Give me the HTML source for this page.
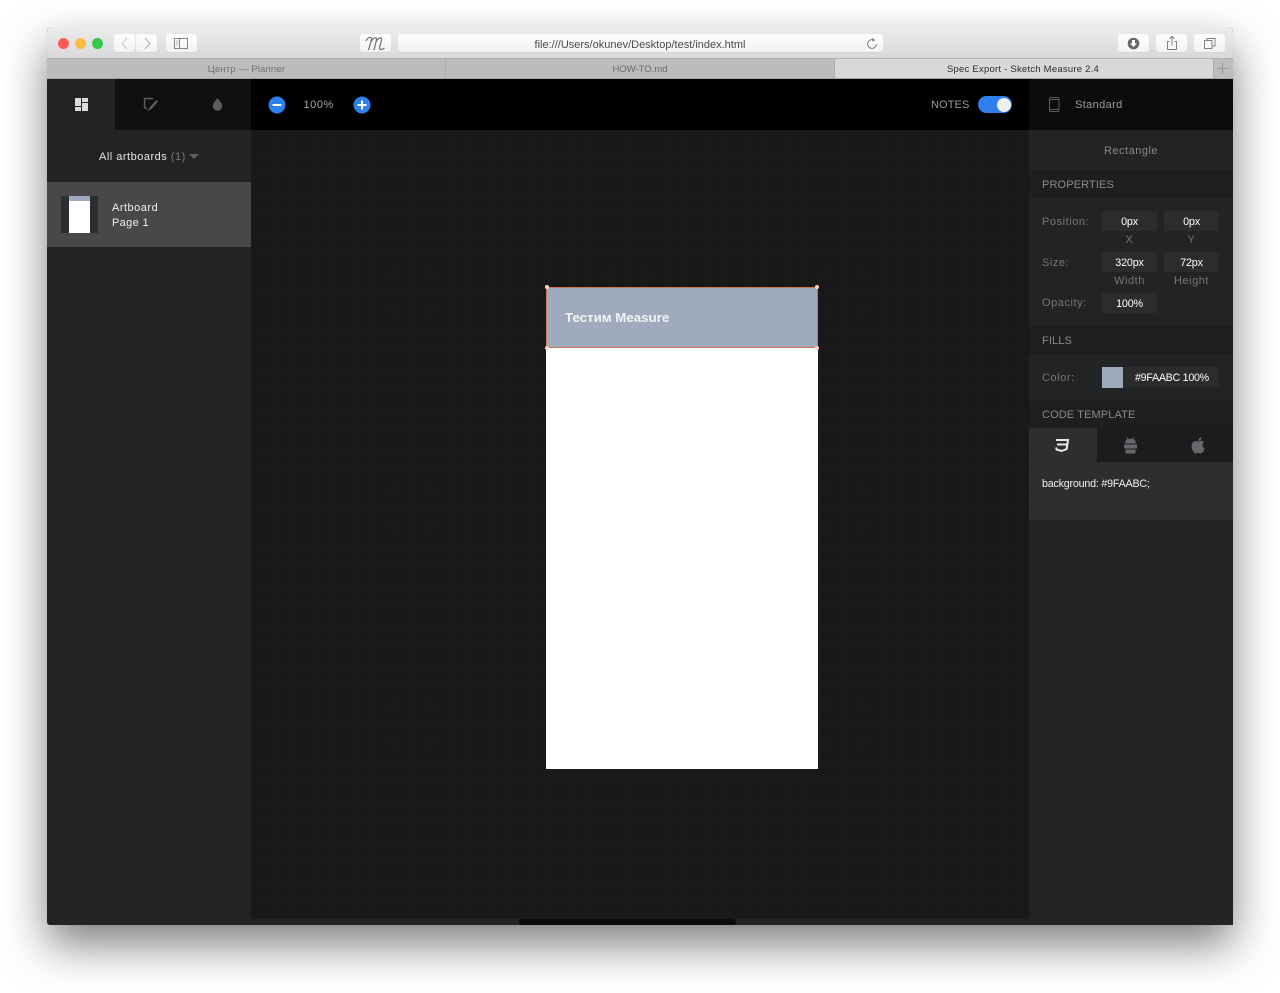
<!DOCTYPE html>
<html><head><meta charset="utf-8"><style>
*{box-sizing:border-box}
html,body{margin:0;padding:0;width:1280px;height:993px;background:#fff;overflow:hidden;font-family:"Liberation Sans","Noto Sans CJK SC",sans-serif}
.a{position:absolute}
.t{position:absolute;white-space:nowrap;line-height:14px}
.btn{position:absolute;background:linear-gradient(#fdfdfd,#f3f3f3);border-radius:3px;box-shadow:0 1px 0 #d4d4d4}
.field{position:absolute;background:#2b2c2e;height:20px;width:55px;color:#fff;font-size:10.800px;line-height:22px;text-align:center;letter-spacing:-.2px}
.lab{position:absolute;color:#77787a;font-size:11px;letter-spacing:.55px;line-height:14px;white-space:nowrap}
.sec{position:absolute;left:1029px;width:204px;background:#1d1e20;color:#8b8c8e;font-size:11px;letter-spacing:.12px;padding-left:13px}
</style></head><body>
<div class="a" style="left:47px;top:27px;width:1186px;height:898px;border-radius:5px 5px 3px 3px;box-shadow:0 0 1px rgba(0,0,0,.1),0 20px 44px rgba(0,0,0,.5)"></div>
<div class="a" style="left:47px;top:27px;width:1186px;height:898px;border-radius:5px 5px 3px 3px;overflow:hidden;background:#222325">
 <div class="a" style="left:0;top:0;width:1186px;height:31px;background:linear-gradient(#ececec,#d9d9d9)"></div>
 <div class="a" style="left:0;top:31px;width:1186px;height:21px;background:#bcbcbc;border-top:1px solid #b0b0b0;border-bottom:1px solid #a4a4a4"></div>
 <div class="a" style="left:788px;top:32px;width:378px;height:19px;background:#d8d8d8"></div>
 <div class="a" style="left:398px;top:32px;width:1px;height:19px;background:#acacac"></div>
 <div class="a" style="left:787px;top:32px;width:1px;height:19px;background:#acacac"></div>
 <div class="a" style="left:1166px;top:32px;width:20px;height:19px;background:#bdbdbd;border-left:1px solid #acacac"></div>
</div>
<div class="a" style="left:58px;top:38px;width:11px;height:11px;border-radius:50%;background:#fc5b57"></div>
<div class="a" style="left:75px;top:38px;width:11px;height:11px;border-radius:50%;background:#fdbc40"></div>
<div class="a" style="left:92px;top:38px;width:11px;height:11px;border-radius:50%;background:#34c84a"></div>

<div class="btn" style="left:114px;top:34px;width:21px;height:18px"></div>
<div class="btn" style="left:136px;top:34px;width:21px;height:18px"></div>
<svg class="a" style="left:114px;top:34px" width="44" height="18" fill="none" stroke-width="1"><path d="M13 4L8 9.500l5 5.500" stroke="#c4c4c4"/><path d="M31 4l5 5.500-5 5.500" stroke="#aaa"/></svg>
<div class="btn" style="left:166px;top:34px;width:31px;height:18px"></div>
<svg class="a" style="left:174px;top:38px" width="15" height="11" fill="none" stroke="#888"><rect x=".5" y=".5" width="13" height="10"/><path d="M5.500 .5v10"/><path d="M2 3h2M2 5h2M2 7h2" stroke="#bbb"/></svg>
<div class="btn" style="left:360px;top:34px;width:31px;height:18px"></div>
<svg class="a" style="left:365px;top:36px" width="22" height="16" fill="none" stroke="#707070" stroke-width="1.200"><path d="M1 5C3 1 7 0 6.500 3.500L3.500 14M6.500 5c2-3.500 5.500-4.500 5-1L9 14M11.500 5c2-3.500 5.500-4.500 5-1L14.500 12c0 2 2.500 2 5 0"/></svg>
<div class="btn" style="left:398px;top:34px;width:485px;height:18px"></div>
<div class="t" style="left:397.500px;width:485px;top:38px;text-align:center;font-size:11px;color:#4a4a4a">file:///Users/okunev/Desktop/test/index.html</div>
<svg class="a" style="left:866px;top:37px" width="12" height="13" fill="none" stroke="#808080"><path d="M8.700 3.500A4.400 4.400 0 1 0 10.400 7"/><path d="M6.500 .8l2.700 2.500-3 1.500z" fill="#808080" stroke="none"/></svg>
<div class="btn" style="left:1118px;top:34px;width:31px;height:18px"></div>
<div class="btn" style="left:1156px;top:34px;width:31px;height:18px"></div>
<div class="btn" style="left:1194px;top:34px;width:31px;height:18px"></div>
<svg class="a" style="left:1127px;top:37px" width="13" height="13"><circle cx="6.500" cy="6.500" r="5.800" fill="#666"/><path d="M5 3h3v3.500h2L6.500 10 3 6.500h2z" fill="#fff"/></svg>
<svg class="a" style="left:1165px;top:35px" width="14" height="16" fill="none" stroke="#808080"><path d="M4.500 6.500h-2v8h9v-8h-2M7 10.500V1.500M4.500 3.800L7 1.300l2.500 2.500"/></svg>
<svg class="a" style="left:1204px;top:38px" width="12" height="11" fill="none" stroke="#808080"><rect x=".5" y="2.500" width="7.500" height="8"/><path d="M3 2.500V.5h8v7.500H8"/></svg>

<div class="t" style="left:47px;width:399px;top:63px;text-align:center;font-size:9.500px;letter-spacing:.18px;color:#6f6f6f">Центр — Planner</div>
<div class="t" style="left:445.500px;width:389px;top:63px;text-align:center;font-size:9.500px;color:#6a6a6a">HOW-TO.md</div>
<div class="t" style="left:834px;width:378px;top:63px;text-align:center;font-size:9.500px;color:#2c2c2c;letter-spacing:.23px">Spec Export - Sketch Measure 2.4</div>
<svg class="a" style="left:1217px;top:63px" width="11" height="11" stroke="#969696"><path d="M5.500 0v11M0 5.500h11"/></svg>

<!-- app -->
<div class="a" style="left:115px;top:79px;width:136px;height:51px;background:#101011"></div>
<div class="a" style="left:47px;top:79px;width:68px;height:51px;background:#222325"></div>
<div class="a" style="left:251px;top:79px;width:778px;height:51px;background:#000"></div>
<div class="a" style="left:1029px;top:79px;width:204px;height:51px;background:#0c0c0d"></div>
<svg class="a" style="left:75px;top:98px" width="13" height="13" fill="#dcdcdc"><rect width="6" height="8"/><rect y="9" width="6" height="4"/><rect x="7" width="6" height="4"/><rect x="7" y="5" width="6" height="8"/></svg>
<svg class="a" style="left:142px;top:96px" width="17" height="16" fill="none" stroke="#5e5e60" stroke-width="1.400"><path d="M11 2.500H2.500v9l2.500 1.500"/><path d="M14.500 4L8 11l-2.500 4.500L10 12.500l6-7z" fill="#5e5e60" stroke="none"/></svg>
<svg class="a" style="left:212px;top:98px" width="11" height="13" fill="#5e5e60"><path d="M5.500 0C4 2.500 .8 5 .8 8a4.700 4.700 0 0 0 9.400 0C10.200 5 7 2.500 5.500 0z"/></svg>

<svg class="a" style="left:267.500px;top:95.500px" width="18" height="18"><circle cx="9" cy="9" r="8.500" fill="#2f80ed"/><rect x="4.500" y="8" width="9" height="2" fill="#fff"/></svg>
<div class="t" style="left:303.500px;top:98px;font-size:11px;letter-spacing:.55px;color:#a6a6a6">100%</div>
<svg class="a" style="left:352.500px;top:95.500px" width="18" height="18"><circle cx="9" cy="9" r="8.500" fill="#2f80ed"/><path d="M4.500 8h9v2h-9z M8 4.500h2v9H8z" fill="#fff"/></svg>
<div class="t" style="left:931px;top:98px;font-size:11px;letter-spacing:.1px;color:#9a9a9a">NOTES</div>
<div class="a" style="left:978px;top:96px;width:34px;height:17px;border-radius:9px;background:#2f80ed"></div>
<div class="a" style="left:997px;top:97.500px;width:14px;height:14px;border-radius:50%;background:#eee"></div>
<svg class="a" style="left:1049px;top:97px" width="11" height="15" fill="none" stroke="#5a5a5c"><rect x=".5" y=".5" width="9.500" height="14" rx="1.500"/><path d="M.5 2.500h9.500M.5 12.500h9.500"/></svg>
<div class="t" style="left:1075px;top:98px;font-size:11px;letter-spacing:.38px;color:#9c9c9c">Standard</div>

<!-- left -->
<div class="t" style="left:99px;top:149.500px;font-size:11px;letter-spacing:.5px;color:#e6e6e6">All artboards <span style="color:#77787a">(1)</span></div>
<svg class="a" style="left:189px;top:154px" width="10" height="5"><path d="M0 0h10L5 5z" fill="#5e5f62"/></svg>
<div class="a" style="left:47px;top:182px;width:204px;height:65px;background:#47484a"></div>
<div class="a" style="left:61px;top:196px;width:37px;height:37px;background:#2d2e31"></div>
<div class="a" style="left:69px;top:196px;width:21px;height:37px;background:#fff"></div>
<div class="a" style="left:69px;top:196px;width:21px;height:5px;background:#9faabc"></div>
<div class="t" style="left:112px;top:200.500px;font-size:11px;letter-spacing:.5px;color:#f0f0f0">Artboard</div>
<div class="t" style="left:112px;top:215.500px;font-size:11px;letter-spacing:.35px;color:#f0f0f0">Page 1</div>

<!-- canvas -->
<svg class="a" style="left:251px;top:130px" width="778" height="795"><defs><pattern id="d" x="5" y="6" width="13.500" height="13.500" patternUnits="userSpaceOnUse"><rect width="13.500" height="13.500" fill="#191919"/><rect x="0" y="0" width="1.500" height="1.500" fill="#101010"/></pattern></defs><rect width="778" height="795" fill="url(#d)"/></svg>
<div class="a" style="left:251px;top:919px;width:778px;height:6px;background:#222325"></div>
<div class="a" style="left:519px;top:919px;width:217px;height:6px;border-radius:3px;background:#0b0b0b"></div>
<div class="a" style="left:546px;top:287px;width:271.500px;height:481.500px;background:#fff"></div>
<div class="a" style="left:546px;top:287px;width:272px;height:61px;background:#9faabc;border:1px solid #d0744f"></div>
<div class="a" style="left:545px;top:285px;width:4px;height:4px;border-radius:50%;background:#f7d6c6"></div>
<div class="a" style="left:815px;top:285px;width:4px;height:4px;border-radius:50%;background:#f7d6c6"></div>
<div class="a" style="left:545px;top:346px;width:4px;height:4px;border-radius:50%;background:#f7d6c6"></div>
<div class="a" style="left:815px;top:346px;width:4px;height:4px;border-radius:50%;background:#f7d6c6"></div>
<div class="t" style="left:565px;top:311px;font-size:13.300px;font-weight:bold;color:#f2f4f7">Тестим Measure</div>

<!-- right -->
<div class="a" style="left:1029px;top:130px;width:204px;height:795px;background:#222325"></div>
<div class="t" style="left:1029px;width:204px;top:143.500px;text-align:center;font-size:11px;letter-spacing:.5px;color:#87888a">Rectangle</div>
<div class="sec" style="top:170px;height:28px;line-height:30px">PROPERTIES</div>
<div class="lab" style="left:1042px;top:214.500px">Position:</div>
<div class="field" style="left:1102px;top:211px">0px</div>
<div class="field" style="left:1164px;top:211px">0px</div>
<div class="lab" style="left:1102px;width:55px;text-align:center;top:232.500px">X</div>
<div class="lab" style="left:1164px;width:55px;text-align:center;top:232.500px">Y</div>
<div class="lab" style="left:1042px;top:255.500px">Size:</div>
<div class="field" style="left:1102px;top:252px">320px</div>
<div class="field" style="left:1164px;top:252px">72px</div>
<div class="lab" style="left:1102px;width:55px;text-align:center;top:273.500px">Width</div>
<div class="lab" style="left:1164px;width:55px;text-align:center;top:273.500px">Height</div>
<div class="lab" style="left:1042px;top:296px">Opacity:</div>
<div class="field" style="left:1102px;top:293px">100%</div>
<div class="sec" style="top:326px;height:28px;line-height:30px">FILLS</div>
<div class="lab" style="left:1042px;top:370.500px">Color:</div>
<div class="a" style="left:1122px;top:367px;width:97px;height:20px;background:#2b2c2e"></div>
<div class="a" style="left:1102px;top:367px;width:21px;height:21px;background:#9faabc"></div>
<div class="t" style="left:1135px;top:370.500px;font-size:10.700px;letter-spacing:-.28px;color:#fff">#9FAABC 100%</div>
<div class="sec" style="top:401px;height:27px;line-height:28px">CODE TEMPLATE</div>
<div class="a" style="left:1097px;top:428px;width:136px;height:34px;background:#1b1c1e"></div>
<div class="a" style="left:1029px;top:428px;width:68px;height:34px;background:#2d2e30"></div>
<div class="a" style="left:1029px;top:462px;width:204px;height:58px;background:#2d2e30"></div>
<svg class="a" style="left:1054px;top:438px" width="16" height="15" fill="none" stroke="#e8e8e8" stroke-width="2"><path d="M2 2h12l-1.300 9L7.500 13 2.500 11.500 2.300 9.500M3 6.500h10"/></svg>
<svg class="a" style="left:1124px;top:437px" width="13" height="17" fill="#66676a"><path d="M3 0l1.200 1.800h4.600L10 0l.6.400-1 1.700C11 3 12 4.500 12 6.500H1C1 4.500 2 3 3.400 2.100l-1-1.700z"/><rect x="0" y="7.500" width="13" height="4"/><path d="M1.500 12.500h10v3a1 1 0 0 1-1 1h-8a1 1 0 0 1-1-1z"/></svg>
<svg class="a" style="left:1191px;top:437px" width="15" height="17" fill="#66676a"><path d="M7.500 4.500C9 3.500 11 3.200 13 5c-2 1.800-2 5 .7 6.500-.8 2.300-2.300 5-4 5-1 0-1.300-.6-2.300-.6s-1.400.6-2.400.6C3 16.500.6 12.500.6 9c0-3.500 2.300-5 4-5 1.300 0 2 .5 2.900.5zM7.300 3.800C7.300 2 8.700.5 10.500.2c.2 1.900-1.300 3.500-3.200 3.600z"/></svg>
<div class="t" style="left:1042px;top:476.500px;font-size:10.700px;letter-spacing:-.2px;color:#f2f2f2">background: #9FAABC;</div>
</body></html>
